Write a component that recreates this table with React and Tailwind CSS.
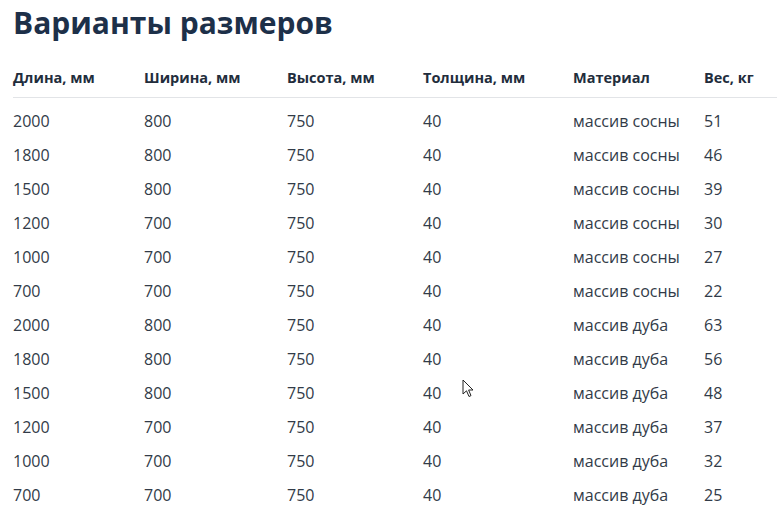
import React from 'react';

const rows = [
  ['2000', '800', '750', '40', 'массив сосны', '51'],
  ['1800', '800', '750', '40', 'массив сосны', '46'],
  ['1500', '800', '750', '40', 'массив сосны', '39'],
  ['1200', '700', '750', '40', 'массив сосны', '30'],
  ['1000', '700', '750', '40', 'массив сосны', '27'],
  ['700', '700', '750', '40', 'массив сосны', '22'],
  ['2000', '800', '750', '40', 'массив дуба', '63'],
  ['1800', '800', '750', '40', 'массив дуба', '56'],
  ['1500', '800', '750', '40', 'массив дуба', '48'],
  ['1200', '700', '750', '40', 'массив дуба', '37'],
  ['1000', '700', '750', '40', 'массив дуба', '32'],
  ['700', '700', '750', '40', 'массив дуба', '25'],
];

const headers = ['Длина, мм', 'Ширина, мм', 'Высота, мм', 'Толщина, мм', 'Материал', 'Вес, кг'];

const cols = 'grid grid-cols-[131px_143px_136px_150px_131px_1fr]';

const Cursor = () => (
  <svg className="absolute left-[462px] top-[379px]" width="14" height="20" viewBox="0 0 14 20">
    <path d="M1 1 L1 15 L4.5 11.8 L7 17.5 L9 16.6 L6.6 11 L11 11 Z" fill="#fff" stroke="#222" strokeWidth="1" strokeLinejoin="round" />
  </svg>
);

const App = () => {
  return (
    <div className="relative w-[777px] h-[512px] overflow-hidden bg-white pl-[13px] font-['Open_Sans','Noto_Sans',sans-serif]">
      <h1 className="text-[30px] leading-[40px] font-bold text-[#1d3049] pt-[3px]">Варианты размеров</h1>

      <div className={`${cols} mt-[17px] h-[38px] items-center border-b border-[#e2e4e7] text-[14.5px] font-bold text-[#222d3c] pb-[1px]`}>
        {headers.map((h) => (
          <div key={h}>{h}</div>
        ))}
      </div>

      <div className="pt-[6px]">
        {rows.map((r, i) => (
          <div key={i} className={`${cols} h-[34px] items-center text-[16px] text-[#323b48]`}>
            {r.map((c, j) => (
              <div key={j}>{c}</div>
            ))}
          </div>
        ))}
      </div>

      <Cursor />
    </div>
  );
};

export default App;
